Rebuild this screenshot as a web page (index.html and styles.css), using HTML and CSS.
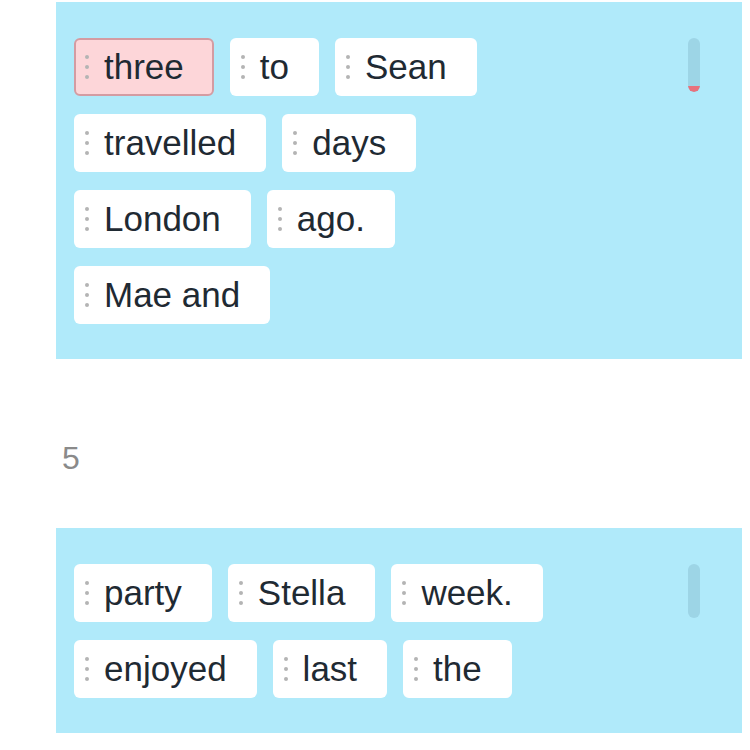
FILE: index.html
```html
<!DOCTYPE html>
<html lang="en">
  <head>
    <meta charset="utf-8">
    <title>Word order</title>
    <link rel="stylesheet" href="styles.css">
  </head>
  <body>
    <div class="sheet">

      <!-- question 4 (scrolled) -->
      <div class="board">
        <div class="scroller"><span class="thumb"></span></div>
        <div class="line">
          <span class="chip picked"><span class="grip"></span>three</span>
          <span class="chip"><span class="grip"></span>to</span>
          <span class="chip"><span class="grip"></span>Sean</span>
        </div>
        <div class="line">
          <span class="chip"><span class="grip"></span>travelled</span>
          <span class="chip"><span class="grip"></span>days</span>
        </div>
        <div class="line">
          <span class="chip"><span class="grip"></span>London</span>
          <span class="chip"><span class="grip"></span>ago.</span>
        </div>
        <div class="line">
          <span class="chip"><span class="grip"></span>Mae and</span>
        </div>
      </div>

      <div class="number">5</div>

      <!-- question 5 -->
      <div class="board">
        <div class="scroller"></div>
        <div class="line">
          <span class="chip"><span class="grip"></span>party</span>
          <span class="chip"><span class="grip"></span>Stella</span>
          <span class="chip"><span class="grip"></span>week.</span>
        </div>
        <div class="line">
          <span class="chip"><span class="grip"></span>enjoyed</span>
          <span class="chip"><span class="grip"></span>last</span>
          <span class="chip"><span class="grip"></span>the</span>
        </div>
      </div>

    </div>
  </body>
</html>
```

FILE: styles.css
```css
body {
  margin: 0;
  background-color: #ffffff;
  font-family: "Liberation Sans", Arial, sans-serif;
}

.sheet {
  margin: 2px 0 0 56px;
  width: 686px;
}

.board {
  position: relative;
  background-color: #b0eafa;
  padding: 36px 18px 35px;
  display: flex;
  flex-direction: column;
  gap: 18px;
}

.line {
  display: flex;
  gap: 16px;
}

.chip {
  position: relative;
  display: flex;
  align-items: center;
  height: 58px;
  box-sizing: border-box;
  padding: 0 30px 0 30px;
  background-color: #ffffff;
  border-radius: 6px;
  font-size: 35px;
  color: #1f2a33;
  white-space: nowrap;
}

.chip.picked {
  background-color: #fdd6d9;
  border: 2px solid #d49ca2;
  padding: 0 28px;
}

/* three little dots on the left of each word */
.grip {
  position: absolute;
  left: 11px;
  top: 50%;
  width: 4px;
  height: 4px;
  margin-top: -12px;
  border-radius: 50%;
  background-color: #b4b4b4;
  box-shadow: 0 10px 0 #b4b4b4, 0 20px 0 #b4b4b4;
}

.picked .grip {
  left: 9px;
}

.scroller {
  position: absolute;
  top: 36px;
  right: 42px;
  width: 12px;
  height: 54px;
  border-radius: 6px;
  background-color: #9dd5e6;
  overflow: hidden;
}

.thumb {
  position: absolute;
  left: 0;
  bottom: 0;
  width: 12px;
  height: 6px;
  border-radius: 0 0 6px 6px;
  background-color: #e8717c;
}

.number {
  height: 139px;
  padding: 30px 0 0 6px;
  display: flex;
  align-items: center;
  font-size: 32px;
  color: #8a8a8a;
}
```
